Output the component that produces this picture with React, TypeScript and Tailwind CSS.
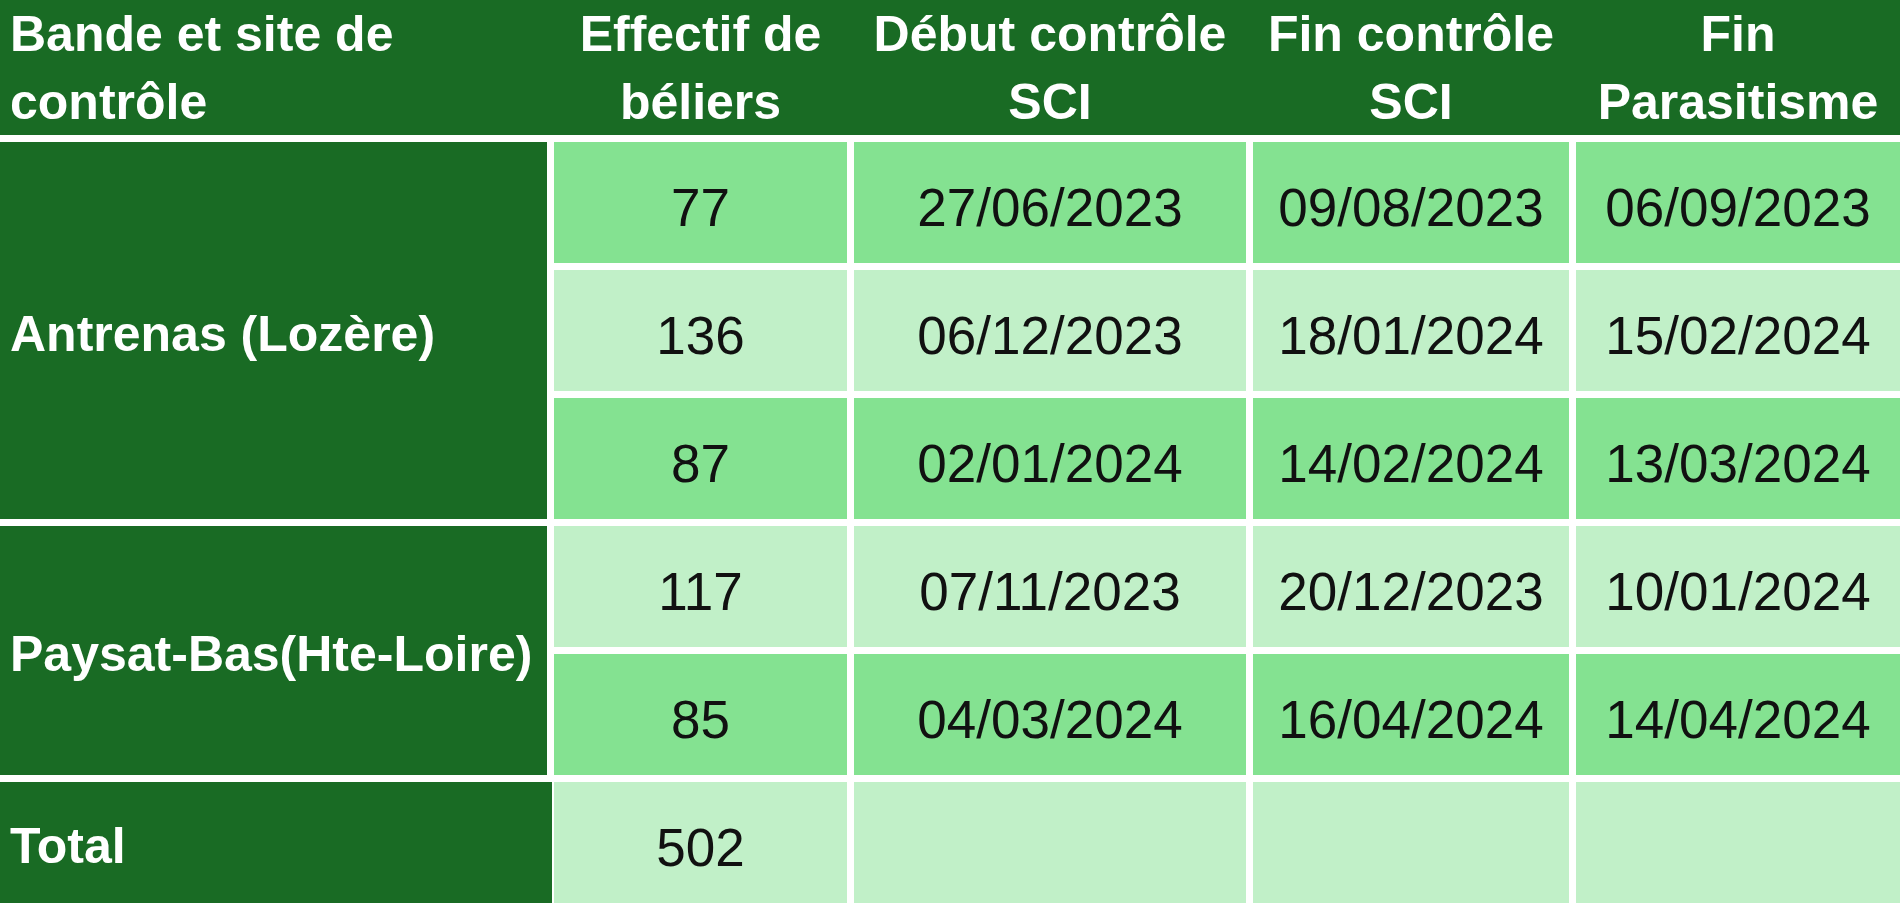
import React from "react";

const COLS = "grid grid-cols-[547px_293px_392px_316px_1fr] gap-x-[7px]";

const rows = [
  { n: "77", a: "27/06/2023", b: "09/08/2023", c: "06/09/2023", tone: "mid" },
  { n: "136", a: "06/12/2023", b: "18/01/2024", c: "15/02/2024", tone: "light" },
  { n: "87", a: "02/01/2024", b: "14/02/2024", c: "13/03/2024", tone: "mid" },
  { n: "117", a: "07/11/2023", b: "20/12/2023", c: "10/01/2024", tone: "light" },
  { n: "85", a: "04/03/2024", b: "16/04/2024", c: "14/04/2024", tone: "mid" },
];

function Cell({ tone, children }: { tone: string; children?: React.ReactNode }) {
  return (
    <div
      className={
        (tone === "mid" ? "bg-[#84e291]" : "bg-[#c1f0c8]") +
        " flex h-[121px] items-center justify-center pt-[10px] text-[53px] text-[#111] [font-family:'Liberation_Sans',Arial,sans-serif]"
      }
    >
      {children}
    </div>
  );
}

function Label({ children, span, extra }: { children: React.ReactNode; span: string; extra?: string }) {
  return (
    <div
      className={
        span +
        " flex items-center bg-[#196b24] pl-[10px] pt-[7px] text-[50px] font-bold text-white [font-family:'Liberation_Sans',Arial,sans-serif] " +
        (extra ?? "")
      }
    >
      {children}
    </div>
  );
}

export default function App() {
  return (
    <div className="h-[907px] w-[1900px] overflow-hidden bg-white">
      <div
        className={
          COLS +
          " h-[135px] bg-[#196b24] text-[50px] font-bold leading-[68px] text-white [font-family:'Liberation_Sans',Arial,sans-serif]"
        }
      >
        <div className="pl-[10px] whitespace-nowrap">
          Bande et site de
          <br />
          contrôle
        </div>
        <div className="text-center whitespace-nowrap">
          Effectif de
          <br />
          béliers
        </div>
        <div className="text-center whitespace-nowrap">
          Début contrôle
          <br />
          SCI
        </div>
        <div className="text-center whitespace-nowrap">
          Fin contrôle
          <br />
          SCI
        </div>
        <div className="text-center whitespace-nowrap">
          Fin
          <br />
          Parasitisme
        </div>
      </div>
      <div className={COLS + " mt-[7px] gap-y-[7px]"}>
        <Label span="row-span-3">Antrenas (Lozère)</Label>
        {rows.slice(0, 3).map((r, i) => (
          <React.Fragment key={i}>
            <Cell tone={r.tone}>{r.n}</Cell>
            <Cell tone={r.tone}>{r.a}</Cell>
            <Cell tone={r.tone}>{r.b}</Cell>
            <Cell tone={r.tone}>{r.c}</Cell>
          </React.Fragment>
        ))}
        <Label span="row-span-2">Paysat-Bas(Hte-Loire)</Label>
        {rows.slice(3).map((r, i) => (
          <React.Fragment key={i}>
            <Cell tone={r.tone}>{r.n}</Cell>
            <Cell tone={r.tone}>{r.a}</Cell>
            <Cell tone={r.tone}>{r.b}</Cell>
            <Cell tone={r.tone}>{r.c}</Cell>
          </React.Fragment>
        ))}
        <Label span="row-span-1" extra="-mr-[5px]">Total</Label>
        <Cell tone="light">502</Cell>
        <Cell tone="light" />
        <Cell tone="light" />
        <Cell tone="light" />
      </div>
    </div>
  );
}
